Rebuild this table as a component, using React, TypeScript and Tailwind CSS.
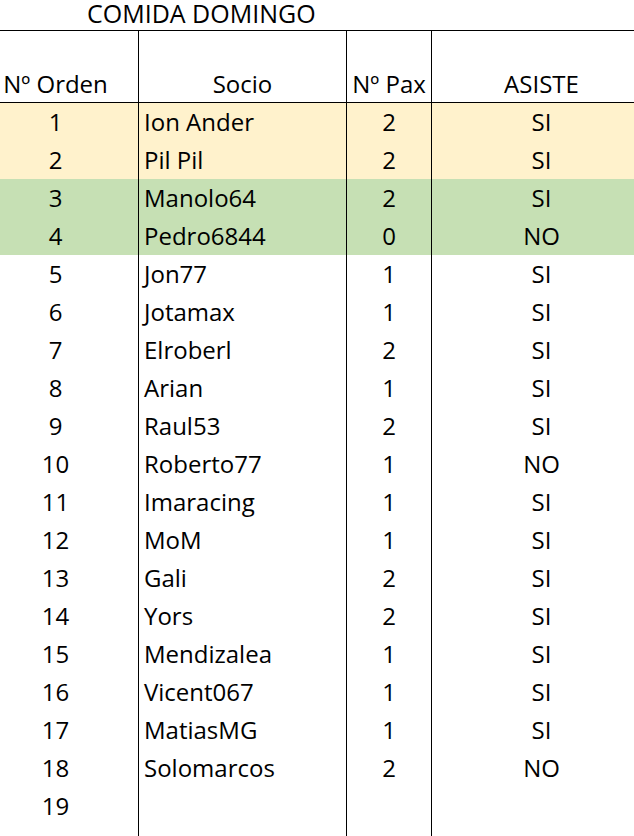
type Row = { n: number; socio: string; pax: string; asiste: string; tone?: "yellow" | "green" };

const rows: Row[] = [
  { n: 1, socio: "Ion Ander", pax: "2", asiste: "SI", tone: "yellow" },
  { n: 2, socio: "Pil Pil", pax: "2", asiste: "SI", tone: "yellow" },
  { n: 3, socio: "Manolo64", pax: "2", asiste: "SI", tone: "green" },
  { n: 4, socio: "Pedro6844", pax: "0", asiste: "NO", tone: "green" },
  { n: 5, socio: "Jon77", pax: "1", asiste: "SI" },
  { n: 6, socio: "Jotamax", pax: "1", asiste: "SI" },
  { n: 7, socio: "Elroberl", pax: "2", asiste: "SI" },
  { n: 8, socio: "Arian", pax: "1", asiste: "SI" },
  { n: 9, socio: "Raul53", pax: "2", asiste: "SI" },
  { n: 10, socio: "Roberto77", pax: "1", asiste: "NO" },
  { n: 11, socio: "Imaracing", pax: "1", asiste: "SI" },
  { n: 12, socio: "MoM", pax: "1", asiste: "SI" },
  { n: 13, socio: "Gali", pax: "2", asiste: "SI" },
  { n: 14, socio: "Yors", pax: "2", asiste: "SI" },
  { n: 15, socio: "Mendizalea", pax: "1", asiste: "SI" },
  { n: 16, socio: "Vicent067", pax: "1", asiste: "SI" },
  { n: 17, socio: "MatiasMG", pax: "1", asiste: "SI" },
  { n: 18, socio: "Solomarcos", pax: "2", asiste: "NO" },
  { n: 19, socio: "", pax: "", asiste: "" },
];

const toneBg = {
  yellow: "bg-[#fff2cc]",
  green: "bg-[#c6e0b4]",
};

export default function App() {
  return (
    <div className="w-[634px] h-[836px] overflow-hidden bg-white text-black [font-family:'Open_Sans',sans-serif] text-[24px] leading-none">
      <div className="w-[651px]">
        {/* title row */}
        <div className="h-[30px] pl-[87px] text-[25px] leading-[26px]">COMIDA DOMINGO</div>

        {/* header */}
        <div className="grid grid-cols-[139px_208px_85px_219px] border-t border-b border-black h-[73px]">
          <div className="border-r border-black flex items-end justify-center pr-[27px] pb-[6px]">Nº Orden</div>
          <div className="border-r border-black flex items-end justify-center pb-[6px]">Socio</div>
          <div className="border-r border-black flex items-end justify-center pb-[6px]">Nº Pax</div>
          <div className="flex items-end justify-center pb-[6px]">ASISTE</div>
        </div>

        {/* data */}
        {rows.map((r) => (
          <div
            key={r.n}
            className={`grid grid-cols-[139px_208px_85px_219px] h-[38px] ${r.tone ? toneBg[r.tone] : ""}`}
          >
            <div className="border-r border-black flex items-end justify-center pr-[27px] pb-[7px]">{r.n}</div>
            <div className="border-r border-black flex items-end pl-[5px] pb-[7px]">{r.socio}</div>
            <div className="border-r border-black flex items-end justify-center pb-[7px]">{r.pax}</div>
            <div className="flex items-end justify-center pb-[7px]">{r.asiste}</div>
          </div>
        ))}
        <div className="grid grid-cols-[139px_208px_85px_219px] h-[40px]">
          <div className="border-r border-black" />
          <div className="border-r border-black" />
          <div className="border-r border-black" />
          <div />
        </div>
      </div>
    </div>
  );
}
